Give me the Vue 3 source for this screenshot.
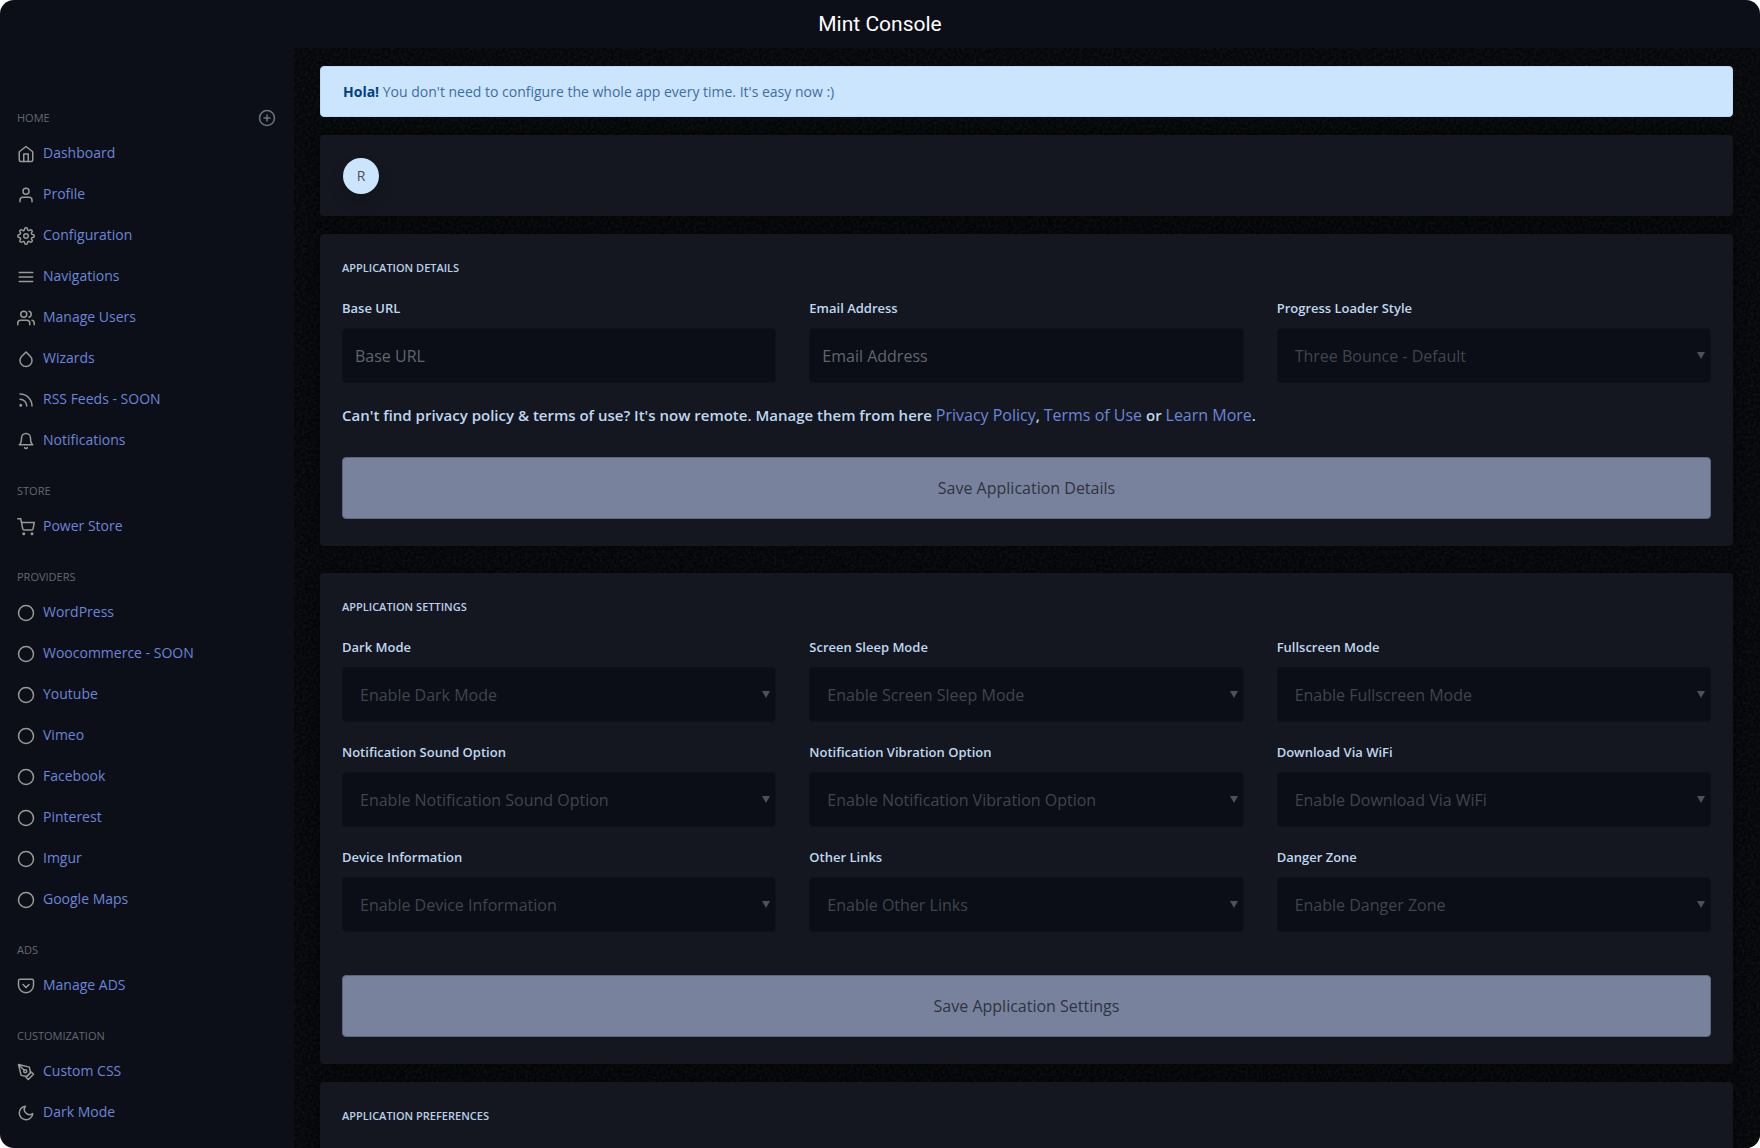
<script setup>
const circle = '<circle cx="12" cy="12" r="10"/>'
const icons = {
  home: '<path d="M3 9l9-7 9 7v11a2 2 0 0 1-2 2H5a2 2 0 0 1-2-2z"/><path d="M9 22V12h6v10"/>',
  user: '<path d="M20 21v-2a4 4 0 0 0-4-4H8a4 4 0 0 0-4 4v2"/><circle cx="12" cy="7" r="4"/>',
  settings: '<circle cx="12" cy="12" r="3"/><path d="M19.4 15a1.65 1.65 0 0 0 .33 1.82l.06.06a2 2 0 0 1 0 2.83 2 2 0 0 1-2.83 0l-.06-.06a1.65 1.65 0 0 0-1.82-.33 1.65 1.65 0 0 0-1 1.51V21a2 2 0 0 1-2 2 2 2 0 0 1-2-2v-.09A1.65 1.65 0 0 0 9 19.4a1.65 1.65 0 0 0-1.82.33l-.06.06a2 2 0 0 1-2.83 0 2 2 0 0 1 0-2.83l.06-.06a1.65 1.65 0 0 0 .33-1.82 1.65 1.65 0 0 0-1.51-1H3a2 2 0 0 1-2-2 2 2 0 0 1 2-2h.09A1.65 1.65 0 0 0 4.6 9a1.65 1.65 0 0 0-.33-1.82l-.06-.06a2 2 0 0 1 0-2.83 2 2 0 0 1 2.83 0l.06.06a1.65 1.65 0 0 0 1.82.33H9a1.65 1.65 0 0 0 1-1.51V3a2 2 0 0 1 2-2 2 2 0 0 1 2 2v.09a1.65 1.65 0 0 0 1 1.51 1.65 1.65 0 0 0 1.82-.33l.06-.06a2 2 0 0 1 2.83 0 2 2 0 0 1 0 2.83l-.06.06a1.65 1.65 0 0 0-.33 1.82V9a1.65 1.65 0 0 0 1.51 1H21a2 2 0 0 1 2 2 2 2 0 0 1-2 2h-.09a1.65 1.65 0 0 0-1.51 1z"/>',
  menu: '<path d="M3 12h18M3 6h18M3 18h18"/>',
  users: '<path d="M17 21v-2a4 4 0 0 0-4-4H5a4 4 0 0 0-4 4v2"/><circle cx="9" cy="7" r="4"/><path d="M23 21v-2a4 4 0 0 0-3-3.87M16 3.13a4 4 0 0 1 0 7.75"/>',
  droplet: '<path d="M12 2.69l5.66 5.66a8 8 0 1 1-11.31 0z"/>',
  rss: '<path d="M4 11a9 9 0 0 1 9 9M4 4a16 16 0 0 1 16 16"/><circle cx="5" cy="19" r="1"/>',
  bell: '<path d="M18 8A6 6 0 0 0 6 8c0 7-3 9-3 9h18s-3-2-3-9M13.73 21a2 2 0 0 1-3.46 0"/>',
  cart: '<circle cx="9" cy="21" r="1"/><circle cx="20" cy="21" r="1"/><path d="M1 1h4l2.68 13.39a2 2 0 0 0 2 1.61h9.72a2 2 0 0 0 2-1.61L23 6H6"/>',
  circle,
  pocket: '<path d="M4 3h16a2 2 0 0 1 2 2v6a10 10 0 0 1-10 10A10 10 0 0 1 2 11V5a2 2 0 0 1 2-2z"/><path d="M8 10l4 4 4-4"/>',
  pen: '<path d="M12 19l7-7 3 3-7 7-3-3z"/><path d="M18 13l-1.5-7.5L2 2l3.5 14.5L13 18l5-5zM2 2l7.586 7.586"/><circle cx="11" cy="11" r="2"/>',
  moon: '<path d="M21 12.79A9 9 0 1 1 11.21 3 7 7 0 0 0 21 12.79z"/>',
  plus: circle + '<path d="M12 8v8M8 12h8"/>',
}

const sections = [
  { title: 'Home', add: true, items: [
    ['home', 'Dashboard'], ['user', 'Profile'], ['settings', 'Configuration'], ['menu', 'Navigations'],
    ['users', 'Manage Users'], ['droplet', 'Wizards'], ['rss', 'RSS Feeds - SOON'], ['bell', 'Notifications'],
  ] },
  { title: 'Store', items: [['cart', 'Power Store']] },
  { title: 'Providers', items: [
    'WordPress', 'Woocommerce - SOON', 'Youtube', 'Vimeo', 'Facebook', 'Pinterest', 'Imgur', 'Google Maps',
  ].map((name) => ['circle', name]) },
  { title: 'Ads', items: [['pocket', 'Manage ADS']] },
  { title: 'Customization', items: [['pen', 'Custom CSS'], ['moon', 'Dark Mode']] },
]

const settings = [
  'Dark Mode', 'Screen Sleep Mode', 'Fullscreen Mode',
  'Notification Sound Option', 'Notification Vibration Option', 'Download Via WiFi',
  'Device Information', 'Other Links', 'Danger Zone',
]
</script>

<template>
  <div class="window">
    <header class="topbar"><h1>Mint Console</h1></header>
    <div class="body">
      <nav class="sidebar">
        <section v-for="s in sections" :key="s.title">
          <div class="nav-head">
            <h2>{{ s.title }}</h2>
            <button v-if="s.add" type="button" class="add" aria-label="Add">
              <svg class="icon" viewBox="0 0 24 24" v-html="icons.plus" />
            </button>
          </div>
          <ul>
            <li v-for="[icon, name] in s.items" :key="name">
              <a href="#">
                <svg class="icon" viewBox="0 0 24 24" v-html="icons[icon]" />
                <span>{{ name }}</span>
              </a>
            </li>
          </ul>
        </section>
      </nav>

      <main>
        <svg class="grain" aria-hidden="true">
          <filter id="grain">
            <feTurbulence type="fractalNoise" baseFrequency="0.35" numOctaves="2" />
            <feColorMatrix values="0 0 0 0 0.5  0 0 0 0 0.5  0 0 0 0 0.5  0.12 0 0 0 -0.04" />
          </filter>
          <rect width="100%" height="100%" filter="url(#grain)" />
        </svg>

        <div class="alert"><strong>Hola!</strong> You don't need to configure the whole app every time. It's easy now :)</div>

        <div class="card profile"><div class="avatar">R</div></div>

        <form class="card details" @submit.prevent>
          <h3>Application Details</h3>
          <div class="fields">
            <div class="field">
              <label for="base-url">Base URL</label>
              <input id="base-url" type="text" placeholder="Base URL">
            </div>
            <div class="field">
              <label for="email">Email Address</label>
              <input id="email" type="email" placeholder="Email Address">
            </div>
            <div class="field">
              <label for="loader">Progress Loader Style</label>
              <div class="select"><select id="loader"><option>Three Bounce - Default</option></select></div>
            </div>
          </div>
          <p class="note">
            Can't find privacy policy &amp; terms of use? It's now remote. Manage them from here
            <a href="#">Privacy Policy</a>, <a href="#">Terms of Use</a> or <a href="#">Learn More</a>.
          </p>
          <button type="submit" class="save">Save Application Details</button>
        </form>

        <form class="card options" @submit.prevent>
          <h3>Application Settings</h3>
          <div class="fields">
            <div v-for="(name, i) in settings" :key="name" class="field">
              <label :for="'setting-' + i">{{ name }}</label>
              <div class="select"><select :id="'setting-' + i"><option>Enable {{ name }}</option></select></div>
            </div>
          </div>
          <button type="submit" class="save">Save Application Settings</button>
        </form>

        <section class="card preferences">
          <h3>Application Preferences</h3>
        </section>
      </main>
    </div>
  </div>
</template>

<style>
body { margin: 0; background: #fff; }
</style>

<style scoped>
* { box-sizing: border-box; }
h1, h2, h3, p, ul { margin: 0; padding: 0; font-weight: 400; }
ul { list-style: none; }
button, input, select { font: inherit; }
a { color: #6a86d8; text-decoration: none; }

.window {
  display: flex;
  flex-direction: column;
  height: 100vh;
  overflow: hidden;
  border-radius: 14px;
  background: #0c0f18;
  font-family: "Open Sans", "Noto Sans", sans-serif;
  font-size: 16px;
}
.topbar { flex: none; height: 48px; text-align: center; }
.topbar h1 { font: 400 21px/48px Roboto, sans-serif; color: #fff; }
.body { flex: 1; display: flex; min-height: 0; }

.sidebar { flex: none; width: 294px; padding: 60px 18px 0 17px; overflow: hidden; }
.nav-head { display: flex; align-items: center; justify-content: space-between; height: 20px; }
.nav-head h2 { font-size: 11px; line-height: 20px; text-transform: uppercase; color: #626870; }
.sidebar section { margin-bottom: 20px; }
.sidebar ul { padding-top: 5px; }
.sidebar li a { display: flex; align-items: center; gap: 8px; height: 41px; font-size: 14px; line-height: 20px; }
.sidebar li span { padding-bottom: 2px; }
.icon { display: block; width: 18px; height: 18px; fill: none; stroke: #999; stroke-width: 2; stroke-linecap: round; stroke-linejoin: round; }
.add { padding: 0; border: 0; background: none; }
.add .icon { stroke: #6c757d; }

main { position: relative; flex: 1; min-width: 0; overflow: hidden; padding: 18px 27px 0 26px; background: #050609; }
.grain { position: absolute; inset: 0; width: 100%; height: 100%; }

.alert { position: relative; height: 51px; padding: 0 22px; border: 1px solid #b8daff; border-radius: 4px; background: #cce5ff; color: #3d6da5; font-size: 14px; line-height: 49px; }
.alert strong { color: #004085; }

.card { position: relative; margin-top: 18px; padding: 0 22px; border-radius: 4px; background: #14171f; box-shadow: 0 0 12px #00000080; }
.profile { padding: 23px; height: 81px; }
.avatar { width: 36px; height: 36px; border-radius: 50%; background: #cce5ff; color: #495057; font-size: 14px; line-height: 36px; text-align: center; box-shadow: 0 8px 16px #00000026; }
.details, .options, .preferences { padding-top: 24px; padding-bottom: 27px; }
.options { margin-top: 27px; }
.preferences { height: 200px; }
.card h3 { font-size: 11px; line-height: 20px; font-weight: 600; text-transform: uppercase; color: #b9d0e8; }

.fields { display: grid; grid-template-columns: repeat(3, 1fr); gap: 20px 33px; margin-top: 20px; }
.field { min-width: 0; }
.field label { display: block; margin-bottom: 10px; font-size: 13px; line-height: 20px; font-weight: 600; color: #bfd7ef; }
.field input, .field select {
  display: block;
  width: 100%;
  height: 55px;
  border: 1px solid #0e1119;
  border-radius: 4px;
  background: #0b0e17;
  color: #40454c;
  outline: 0;
}
.field input { padding: 0 12px; }
.field input::placeholder { color: #5f666e; opacity: 1; }
.field select { appearance: none; padding: 0 17px; }
.select { position: relative; }
.select::after {
  content: "";
  position: absolute;
  top: 24px;
  right: 6px;
  border: solid transparent;
  border-width: 7px 4px 0;
  border-top-color: #4c5157;
  pointer-events: none;
}

.note { margin-top: 20px; font-size: 15px; line-height: 24px; font-weight: 600; color: #bfd7ef; }
.note a { font-size: 16px; font-weight: 400; }
.save { display: block; width: 100%; height: 62px; border: 1px solid #5d657a; border-radius: 4px; background: #79829c; color: #2e343e; }
.details .save { margin-top: 30px; }
.options .save { margin-top: 43px; }
</style>
